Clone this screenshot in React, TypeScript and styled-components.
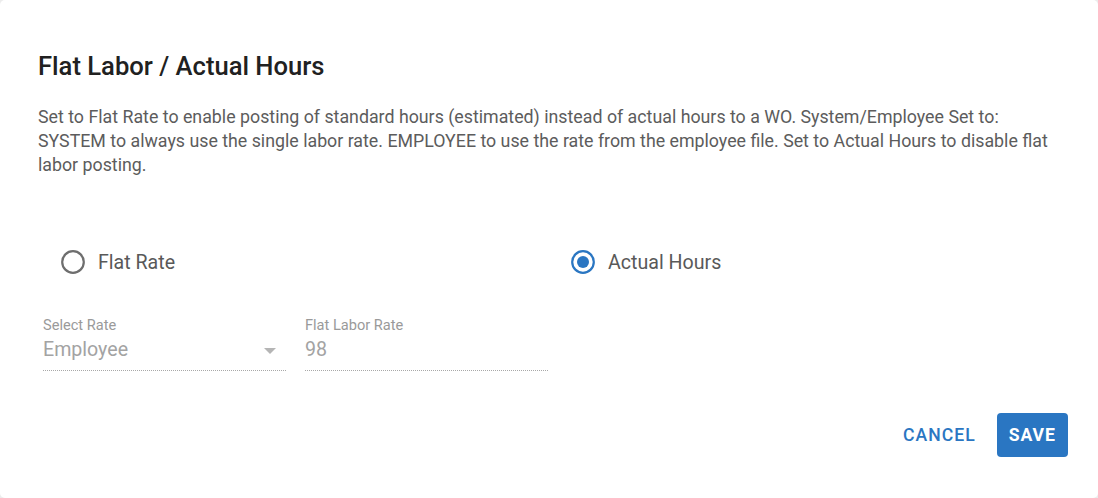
import React from "react";
import styled, { createGlobalStyle } from "styled-components";

const Global = createGlobalStyle`
  html, body { margin: 0; padding: 0; background: #ececec; }
  body { font-family: Roboto, "Noto Sans", Arial, sans-serif; }
  * { box-sizing: border-box; }
`;

const Dialog = styled.div`
  width: 1098px;
  height: 498px;
  background: #fff;
  border-radius: 5px;
  padding: 49px 24px 0 38px;
  display: flex;
  flex-direction: column;
`;

const Title = styled.h2`
  margin: 0;
  font-size: 25.6px;
  line-height: 34px;
  font-weight: 500;
  color: #212121;
`;

const Description = styled.p`
  margin: 22px 0 0;
  max-width: 1014px;
  font-size: 17.8px;
  line-height: 24px;
  color: #5c5c5c;
`;

const RadioRow = styled.div`
  margin-top: 64px;
  height: 42px;
  display: flex;
  align-items: center;
  padding-left: 23px;
`;

const Option = styled.label`
  flex: 0 0 510px;
  display: flex;
  align-items: center;
  gap: 13px;
  font-size: 19.6px;
  color: #595959;
  cursor: pointer;
`;

const Fields = styled.div`
  margin-top: 33px;
  padding-left: 5px;
  display: flex;
  gap: 19px;
`;

const Field = styled.div`
  width: 243px;
  position: relative;
  border-bottom: 1px dotted #a8a8a8;
  padding-bottom: 4px;
`;

const FieldLabel = styled.div`
  font-size: 14.6px;
  line-height: 18px;
  color: #9a9a9a;
`;

const FieldValue = styled.div`
  font-size: 19.6px;
  line-height: 32px;
  color: #a3a3a3;
`;

const Arrow = styled.span`
  position: absolute;
  right: 10px;
  top: 32px;
  width: 0;
  height: 0;
  border-left: 6px solid transparent;
  border-right: 6px solid transparent;
  border-top: 6px solid #b5b5b5;
`;

const Footer = styled.div`
  margin-top: 42px;
  display: flex;
  justify-content: flex-end;
  align-items: center;
  gap: 9px;
  padding-right: 6px;
`;

const Button = styled.button<{ $primary?: boolean }>`
  height: 44px;
  padding: 0 12px;
  border: none;
  border-radius: 4px;
  font-family: Roboto, Arial, sans-serif;
  font-size: 17.6px;
  font-weight: ${(p) => (p.$primary ? 700 : 500)};
  letter-spacing: 1px;
  text-transform: uppercase;
  background: ${(p) => (p.$primary ? "#2a76c2" : "transparent")};
  color: ${(p) => (p.$primary ? "#fff" : "#2a76c2")};
  cursor: pointer;
`;

const RadioIcon = ({ checked }: { checked?: boolean }) => (
  <svg width="24" height="24" viewBox="0 0 24 24">
    <circle
      cx="12"
      cy="12"
      r="10.8"
      fill="none"
      stroke={checked ? "#2a76c2" : "#6e6e6e"}
      strokeWidth="2.2"
    />
    {checked && <circle cx="12" cy="12" r="6" fill="#2a76c2" />}
  </svg>
);

export default function App() {
  return (
    <>
      <Global />
      <Dialog>
        <Title>Flat Labor / Actual Hours</Title>
        <Description>
          Set to Flat Rate to enable posting of standard hours (estimated) instead of actual hours to a WO.
          System/Employee Set to: SYSTEM to always use the single labor rate. EMPLOYEE to use the rate from the
          employee file. Set to Actual Hours to disable flat labor posting.
        </Description>
        <RadioRow>
          <Option>
            <RadioIcon />
            Flat Rate
          </Option>
          <Option>
            <RadioIcon checked />
            Actual Hours
          </Option>
        </RadioRow>
        <Fields>
          <Field>
            <FieldLabel>Select Rate</FieldLabel>
            <FieldValue>Employee</FieldValue>
            <Arrow />
          </Field>
          <Field>
            <FieldLabel>Flat Labor Rate</FieldLabel>
            <FieldValue>98</FieldValue>
          </Field>
        </Fields>
        <Footer>
          <Button>Cancel</Button>
          <Button $primary>Save</Button>
        </Footer>
      </Dialog>
    </>
  );
}
